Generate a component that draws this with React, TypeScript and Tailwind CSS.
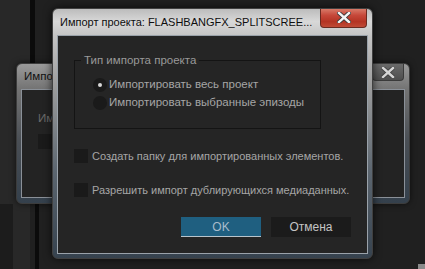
import React from "react";

const font = { fontFamily: '"Liberation Sans", Arial, sans-serif' };

function CloseGlyph({ className }: { className?: string }) {
  return (
    <svg width="14" height="11" viewBox="0 0 14 11" className={className}>
      <path
        d="M2 1 L12 10 M12 1 L2 10"
        stroke="#3a3a3a"
        strokeWidth="4.2"
        strokeLinecap="square"
        fill="none"
      />
      <path
        d="M2 1 L12 10 M12 1 L2 10"
        stroke="#f4f4f4"
        strokeWidth="2.4"
        strokeLinecap="square"
        fill="none"
      />
    </svg>
  );
}

function Radio({ checked, label }: { checked?: boolean; label: string }) {
  return (
    <div className="flex h-[18px] items-center gap-[2px]">
      <span className="flex h-[14px] w-[14px] shrink-0 items-center justify-center rounded-full bg-[#1a1a1a]">
        {checked && <span className="h-[4px] w-[4px] rounded-full bg-[#d8d8d8]" />}
      </span>
      <span className="whitespace-nowrap text-[11.5px] text-[#a6a6a6]">{label}</span>
    </div>
  );
}

function Checkbox({ label }: { label: string }) {
  return (
    <div className="flex h-[14px] items-center gap-[4px]">
      <span className="h-[14px] w-[14px] shrink-0 bg-[#1a1a1a]" />
      <span className="whitespace-nowrap text-[11px] text-[#a6a6a6]">{label}</span>
    </div>
  );
}

export default function App() {
  return (
    <div
      className="relative h-[269px] w-[425px] overflow-hidden bg-[#202020]"
      style={font}
    >
      {/* desktop backdrop */}
      <div className="absolute left-0 top-0 h-full w-[30px] bg-[#282828]" />
      <div className="absolute left-[30px] top-0 h-[65px] w-[5px] bg-[#0b0b0b]" />
      <div className="absolute left-[35px] top-[204px] h-[65px] w-[4px] bg-[#0b0b0b]" />
      <div className="absolute left-0 top-[204px] h-[65px] w-[13px] bg-[#1c1c1c]" />
      <div className="absolute bottom-0 right-0 h-[5px] w-[7px] bg-[#8a8a8a]" />

      {/* background window */}
      <div className="absolute left-[16px] top-[63px] flex h-[141px] w-[394px] flex-col rounded-[6px] border border-[#3c3c3c] bg-[linear-gradient(180deg,#9a9a9a_0%,#747474_18%,#4a4f55_55%,#34404c_100%)] px-[4px] pb-[5px] shadow-[0_0_6px_rgba(0,0,0,0.6)]">
        <div className="flex h-[25px] items-center">
          <span className="whitespace-nowrap pl-[3px] text-[11.5px] text-[#111]">Импорт проекта</span>
          <div className="ml-auto mr-[1px] flex h-[17px] w-[32px] shrink-0 -translate-y-[4px] items-center justify-center rounded-b-[4px] border border-t-0 border-[#3a3a3a] bg-[linear-gradient(180deg,#6a6a6a,#4e4e4e)]">
            <CloseGlyph className="opacity-80" />
          </div>
        </div>
        <div className="flex-1 border border-[#8a9098] bg-[#232323] pl-[16px] pt-[20px]">
          <div className="text-[11.5px] text-[#6a6a6a]">Импорт</div>
          <div className="mt-[7px] h-[15px] w-[200px] bg-[#1a1a1a]" />
        </div>
      </div>

      {/* main window */}
      <div className="absolute left-[52px] top-[8px] flex h-[251px] w-[321px] flex-col rounded-[6px] border border-[#404040] bg-[linear-gradient(180deg,#bcbcbc_0%,#d8d8d8_5%,#c4c4c4_11%,#9e9e9e_30%,#5c6670_65%,#36424e_100%)] px-[4px] pb-[4px] shadow-[0_0_8px_rgba(0,0,0,0.7)]">
        <div className="flex h-[26px] items-center">
          <span className="whitespace-nowrap pl-[3px] text-[11px] text-[#0e0e0e]">
            Импорт проекта: FLASHBANGFX_SPLITSCREE...
          </span>
          <div className="ml-auto mr-[1px] flex h-[19px] w-[47px] shrink-0 -translate-y-[4px] items-center justify-center rounded-b-[4px] border border-t-0 border-[#6a2a20] bg-[linear-gradient(180deg,#d87a68_0%,#c6483a_35%,#b43424_70%,#c04a36_100%)]">
            <CloseGlyph />
          </div>
        </div>
        <div className="flex flex-1 flex-col border border-[#9aa2aa] bg-[#252525] px-[16px]">
          <div className="relative mt-[24px] h-[69px] w-[247px] shrink-0 border border-[#141414]">
            <span className="absolute left-[6px] top-[-9px] whitespace-nowrap bg-[#252525] px-[3px] text-[11.5px] leading-[16px] text-[#999]">
              Тип импорта проекта
            </span>
            <div className="flex flex-col pl-[18px] pt-[15px]">
              <Radio checked label="Импортировать весь проект" />
              <Radio label="Импортировать выбранные эпизоды" />
            </div>
          </div>
          <div className="mt-[20px]">
            <Checkbox label="Создать папку для импортированных элементов." />
          </div>
          <div className="mt-[20px]">
            <Checkbox label="Разрешить импорт дублирующихся медиаданных." />
          </div>
          <div className="mt-[20px] flex gap-[10px] pl-[107px]">
            <button className="h-[20px] w-[80px] border-b border-[#b8c4cc] bg-[#1f5f80] text-[12px] text-[#a9bccb]">
              OK
            </button>
            <button className="h-[20px] w-[80px] bg-[#1b1b1b] text-[12px] text-[#c4c4c4]">
              Отмена
            </button>
          </div>
        </div>
      </div>
    </div>
  );
}
